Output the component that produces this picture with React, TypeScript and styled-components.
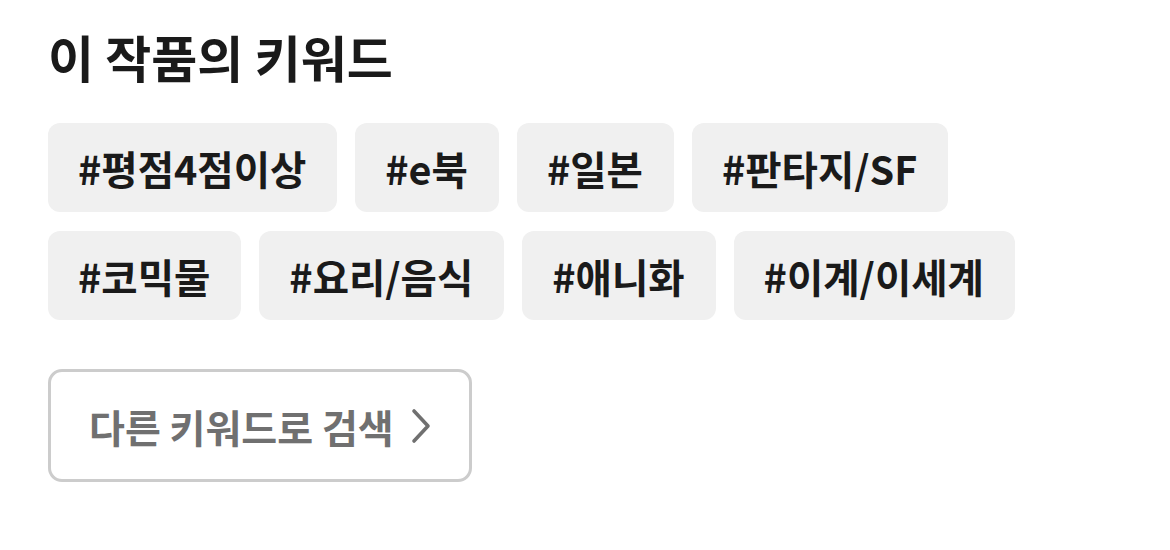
import styled, { createGlobalStyle } from "styled-components";

const GlobalStyle = createGlobalStyle`
  body {
    margin: 0;
    background: #ffffff;
    font-family: "Noto Sans CJK KR", "Noto Sans", sans-serif;
  }
`;

const KEYWORD_ROWS = [
  ["#평점4점이상", "#e북", "#일본", "#판타지/SF"],
  ["#코믹물", "#요리/음식", "#애니화", "#이계/이세계"],
];

function ChevronRight() {
  return (
    <svg width="20" height="36" viewBox="0 0 20 36" fill="none">
      <polyline
        points="3,3 17,18 3,33"
        stroke="#707070"
        strokeWidth="3.6"
        strokeLinecap="round"
        strokeLinejoin="round"
      />
    </svg>
  );
}

function App() {
  return (
    <Wrapper>
      <GlobalStyle />
      <Title>이 작품의 키워드</Title>
      <KeywordList>
        {KEYWORD_ROWS.map((row, i) => (
          <KeywordRow key={i}>
            {row.map((keyword) => (
              <KeywordChip key={keyword}>{keyword}</KeywordChip>
            ))}
          </KeywordRow>
        ))}
      </KeywordList>
      <SearchButton>
        다른 키워드로 검색
        <ChevronRight />
      </SearchButton>
    </Wrapper>
  );
}

export default App;

const Wrapper = styled.div`
  display: flex;
  flex-direction: column;
  align-items: flex-start;
  padding: 24px 48px 0 48px;
`;

const Title = styled.h2`
  margin: 0;
  font-size: 50px;
  line-height: 64px;
  font-weight: 700;
  color: #1a1a1a;
  letter-spacing: 0;
`;

const KeywordList = styled.div`
  display: flex;
  flex-direction: column;
  gap: 19px;
  margin-top: 35px;
`;

const KeywordRow = styled.div`
  display: flex;
  gap: 18px;
`;

const KeywordChip = styled.div`
  display: flex;
  align-items: center;
  height: 89px;
  padding: 0 31px 0 30px;
  background: #f0f0f0;
  border-radius: 12px;
  font-size: 39.5px;
  font-weight: 700;
  color: #1a1a1a;
  letter-spacing: 0;
`;

const SearchButton = styled.button`
  display: flex;
  align-items: center;
  gap: 17px;
  margin-top: 49px;
  height: 113px;
  padding: 0 38px 0 38px;
  background: #ffffff;
  border: 3px solid #cccccc;
  border-radius: 14px;
  font-family: inherit;
  font-size: 39px;
  font-weight: 700;
  color: #707070;
  letter-spacing: 0;
  cursor: pointer;
`;
